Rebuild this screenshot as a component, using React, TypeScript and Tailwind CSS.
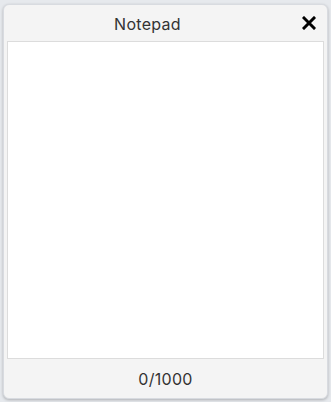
import React, { useState } from "react";

export default function App() {
  const [text, setText] = useState("");

  return (
    <div className="h-[402px] w-[331px] bg-[#e6e9ed] px-[3px] pt-[4px] pb-[3px] font-['Inter',sans-serif]">
      <div className="flex h-full flex-col rounded-[6px] border border-[#d8dbe0] bg-[#f4f4f4] shadow-[0_1px_3px_rgba(0,0,0,0.25)]">
        {/* Header */}
        <div className="flex h-[36px] shrink-0 items-center">
          <span className="flex-1 pt-[1px] text-center text-[16px] tracking-[0.3px] text-[#333]">Notepad</span>
          <button className="flex h-[36px] w-[36px] items-center justify-center text-black">
            <svg width="14" height="14" viewBox="0 0 14 14">
              <path d="M2 2L12 12M12 2L2 12" stroke="currentColor" strokeWidth="3" strokeLinecap="square" />
            </svg>
          </button>
        </div>

        {/* Body */}
        <div className="flex-1 px-[3px]">
          <textarea
            value={text}
            onChange={(e) => setText(e.target.value.slice(0, 1000))}
            className="h-full w-full resize-none border border-[#dcdcdc] bg-white p-2 text-sm outline-none"
          />
        </div>

        {/* Footer */}
        <div className="flex h-[39px] shrink-0 items-center justify-center">
          <span className="text-[16px] tracking-[0.3px] text-[#333]">{text.length}/1000</span>
        </div>
      </div>
    </div>
  );
}
